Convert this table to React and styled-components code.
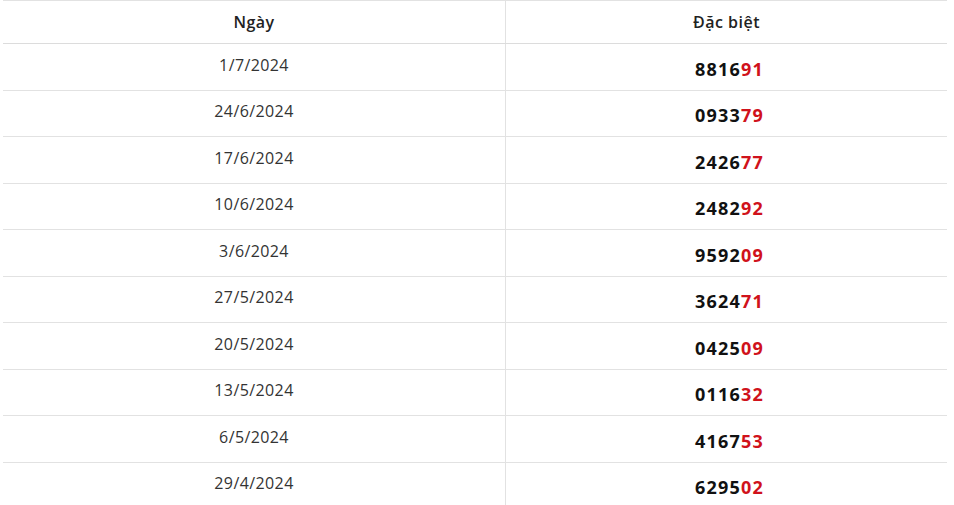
import React from "react";
import styled, { createGlobalStyle } from "styled-components";

const Global = createGlobalStyle`
  html, body { margin: 0; padding: 0; background: #fff; }
  body { font-family: "Open Sans", "Noto Sans", sans-serif; }
`;

const Wrap = styled.div`
  padding: 0 7px 0 3px;
`;

const Table = styled.table`
  width: 100%;
  border-collapse: collapse;
  border-top: 1px solid #e2e2e2;
`;

const Th = styled.th`
  height: 42px;
  padding: 0;
  font-size: 16px;
  font-weight: 600;
  letter-spacing: 0.5px;
  color: #222;
  text-align: center;
  border-bottom: 1px solid #dcdcdc;
  & + & { border-left: 1px solid #e2e2e2; }
`;

const Row = styled.tr`
  border-bottom: 1px solid #e2e2e2;
`;

const DateCell = styled.td`
  width: 502px;
  height: 41.5px;
  padding: 0 0 4px;
  text-align: center;
  font-size: 16px;
  letter-spacing: 0.4px;
  color: #333;
`;

const NumCell = styled.td`
  padding: 4px 0 0 6px;
  text-align: center;
  border-left: 1px solid #e2e2e2;
  font-size: 18px;
  font-weight: 700;
  letter-spacing: 1.2px;
  color: #111;
`;

const Tail = styled.span`
  color: #d0121b;
`;

const data = [
  ["1/7/2024", "881691"],
  ["24/6/2024", "093379"],
  ["17/6/2024", "242677"],
  ["10/6/2024", "248292"],
  ["3/6/2024", "959209"],
  ["27/5/2024", "362471"],
  ["20/5/2024", "042509"],
  ["13/5/2024", "011632"],
  ["6/5/2024", "416753"],
  ["29/4/2024", "629502"],
];

export default function App() {
  return (
    <Wrap>
      <Global />
      <Table>
        <thead>
          <tr>
            <Th>Ngày</Th>
            <Th>Đặc biệt</Th>
          </tr>
        </thead>
        <tbody>
          {data.map(([d, n]) => (
            <Row key={d}>
              <DateCell>{d}</DateCell>
              <NumCell>
                {n.slice(0, 4)}
                <Tail>{n.slice(4)}</Tail>
              </NumCell>
            </Row>
          ))}
        </tbody>
      </Table>
    </Wrap>
  );
}
